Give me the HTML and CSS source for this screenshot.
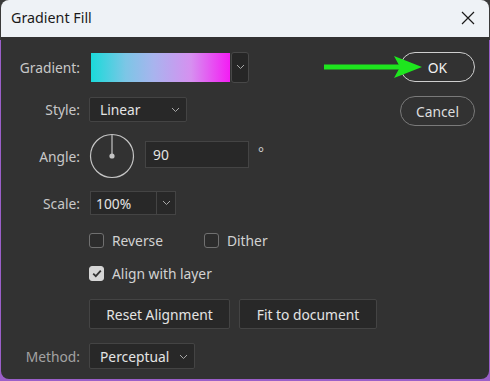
FILE: index.html
```html
<!DOCTYPE html>
<html>
<head>
<meta charset="utf-8">
<link rel="stylesheet" href="styles.css">
</head>
<body>
<div class="dialog">
  <div class="titlebar">
    <span class="title">Gradient Fill</span>
    <svg class="close" width="14" height="14" viewBox="0 0 14 14"><path d="M1 1L13 13M13 1L1 13" stroke="#1a1a1a" stroke-width="1.2" fill="none"/></svg>
  </div>
  <div class="content">
    <div class="form">
      <div class="row r-grad">
        <span class="lbl">Gradient:</span>
        <div class="swatch"></div>
        <div class="swatch-arrow"><svg width="9" height="6" viewBox="0 0 9 6"><path d="M1 1L4.5 4.5L8 1" stroke="#a8a8a8" stroke-width="1" fill="none"/></svg></div>
      </div>
      <div class="row r-style">
        <span class="lbl">Style:</span>
        <div class="select sel-style"><span>Linear</span><svg width="9" height="6" viewBox="0 0 9 6"><path d="M1 1L4.5 4.5L8 1" stroke="#a8a8a8" stroke-width="1" fill="none"/></svg></div>
      </div>
      <div class="row r-angle">
        <span class="lbl">Angle:</span>
        <svg class="dial" width="46" height="46" viewBox="0 0 46 46"><circle cx="23" cy="23" r="21.5" stroke="#c4c4c4" stroke-width="1.2" fill="none"/><path d="M23 23V2" stroke="#c4c4c4" stroke-width="1.2"/><circle cx="23" cy="23" r="2.6" fill="#c4c4c4"/></svg>
        <div class="input angle-input">90</div>
        <span class="deg">°</span>
      </div>
      <div class="row r-scale">
        <span class="lbl">Scale:</span>
        <div class="combo"><span class="combo-val">100%</span><span class="combo-btn"><svg width="9" height="6" viewBox="0 0 9 6"><path d="M1 1L4.5 4.5L8 1" stroke="#a8a8a8" stroke-width="1" fill="none"/></svg></span></div>
      </div>
      <div class="row r-checks">
        <span class="lbl"></span>
        <label class="check"><span class="box"></span>Reverse</label>
        <label class="check dither"><span class="box"></span>Dither</label>
      </div>
      <div class="row r-align">
        <span class="lbl"></span>
        <label class="check"><span class="box checked"><svg width="10" height="9" viewBox="0 0 10 9"><path d="M1.2 4.6L3.8 7.2L8.8 1.6" stroke="#333" stroke-width="1.8" fill="none"/></svg></span>Align with layer</label>
      </div>
      <div class="row r-buttons">
        <span class="lbl"></span>
        <button class="sbtn reset">Reset Alignment</button>
        <button class="sbtn fit">Fit to document</button>
      </div>
      <div class="row r-method">
        <span class="lbl dim">Method:</span>
        <div class="select sel-method"><span>Perceptual</span><svg width="9" height="6" viewBox="0 0 9 6"><path d="M1 1L4.5 4.5L8 1" stroke="#a8a8a8" stroke-width="1" fill="none"/></svg></div>
      </div>
    </div>
    <div class="actions">
      <button class="pill ok">OK</button>
      <button class="pill cancel">Cancel</button>
    </div>
    <svg class="arrow" width="100" height="24" viewBox="0 0 100 24"><path d="M0 12H76" stroke="#1ee61e" stroke-width="5"/><path d="M70 1L98 12L70 23L76 12Z" fill="#1ee61e"/></svg>
  </div>
</div>
</body>
</html>
```

FILE: styles.css
```css
html, body {
  margin: 0;
  padding: 0;
}
body {
  width: 490px;
  height: 381px;
  overflow: hidden;
  background: linear-gradient(#3a3a3a 0 40px, #9b5fc9 40px);
  font-family: "Noto Sans", "Open Sans", sans-serif;
}
.dialog {
  margin: 0 1px 0 1px;
  height: 379px;
  background: #323232;
  border-radius: 8px;
  overflow: hidden;
  display: flex;
  flex-direction: column;
}
.titlebar {
  height: 37px;
  flex: none;
  background: #eef2f6;
  display: flex;
  align-items: center;
  justify-content: space-between;
  padding: 0 14px 0 10px;
}
.title {
  font-size: 14.3px;
  color: #1a1a1a;
  position: relative;
  top: -1px;
}
.close {
  position: relative;
  top: -1px;
}
.content {
  position: relative;
  flex: 1;
  display: flex;
  padding-top: 15px;
}
.form {
  display: flex;
  flex-direction: column;
}
.row {
  display: flex;
  align-items: center;
}
.lbl {
  width: 79px;
  flex: none;
  text-align: right;
  font-size: 13.8px;
  color: #c8c8c8;
  margin-right: 9px;
}
.lbl.dim {
  color: #a3a3a3;
}
.r-grad { height: 30px; }
.swatch {
  width: 139px;
  height: 29px;
  margin-left: 2px;
  background: linear-gradient(90deg, #1adada 0%, #7cc6e6 25%, #a8b4ee 45%, #d690f0 72%, #f41cf4 100%);
}
.swatch-arrow {
  width: 16px;
  height: 29px;
  margin-left: 1px;
  border: 1px solid #484848;
  border-radius: 3px;
  background: #262626;
  display: flex;
  align-items: center;
  justify-content: center;
}
.r-style { height: 25px; margin-top: 15px; }
.select {
  height: 23px;
  border: 1px solid #444;
  border-radius: 2px;
  background: #282828;
  display: flex;
  align-items: center;
  justify-content: space-between;
  padding: 0 6px 0 10px;
  font-size: 13.8px;
  color: #e4e4e4;
}
.select svg { margin-top: 1px; }
.sel-style { width: 80px; }
.r-angle { height: 46px; margin-top: 11px; }
.dial { margin-left: 0px; flex: none; }
.input {
  height: 25px;
  border: 1px solid #444;
  background: #282828;
  color: #e4e4e4;
  font-size: 13.8px;
  display: flex;
  align-items: center;
  padding-left: 7px;
  box-sizing: border-box;
}
.angle-input {
  width: 104px;
  height: 27px;
  margin-left: 10px;
  margin-top: -3px;
}
.deg {
  color: #c8c8c8;
  font-size: 14px;
  margin-left: 9px;
  margin-top: -8px;
}
.r-scale { height: 24px; margin-top: 12px; }
.combo {
  display: flex;
  height: 24px;
  box-sizing: border-box;
  border: 1px solid #444;
  background: #282828;
  margin-left: 1px;
}
.combo-val {
  width: 60px;
  padding-left: 5px;
  display: flex;
  align-items: center;
  font-size: 13.8px;
  color: #e4e4e4;
  border-right: 1px solid #444;
}
.combo-btn {
  width: 18px;
  display: flex;
  align-items: center;
  justify-content: center;
}
.r-checks { height: 20px; margin-top: 15px; }
.r-align { height: 20px; margin-top: 13px; }
.check {
  display: flex;
  align-items: center;
  font-size: 13.8px;
  color: #d2d2d2;
}
.box {
  width: 13px;
  height: 13px;
  border: 1px solid #707070;
  border-radius: 3px;
  background: #2c2c2c;
  margin-right: 8px;
  display: flex;
  align-items: center;
  justify-content: center;
}
.box.checked {
  background: #d6d6d6;
  border-color: #d6d6d6;
}
.dither { margin-left: 41px; }
.r-buttons { height: 30px; margin-top: 16px; }
.sbtn {
  height: 30px;
  box-sizing: border-box;
  border: 1px solid #444;
  border-radius: 2px;
  background: #282828;
  color: #e4e4e4;
  font-family: inherit;
  font-size: 13.8px;
  padding: 0;
}
.reset { width: 141px; }
.fit { width: 138px; margin-left: 9px; }
.r-method { height: 26px; margin-top: 14px; }
.sel-method { width: 88px; height: 24px; }
.actions {
  margin-left: auto;
  margin-right: 14px;
  display: flex;
  flex-direction: column;
  gap: 14px;
}
.pill {
  width: 75px;
  height: 30px;
  box-sizing: border-box;
  border-radius: 15px;
  background: #323232;
  font-family: inherit;
  font-size: 13.8px;
  padding: 0;
}
.ok {
  border: 1.5px solid #cfcfcf;
  color: #f2f2f2;
}
.cancel {
  border: 1px solid #7a7a7a;
  color: #dedede;
}
.arrow {
  position: absolute;
  left: 323px;
  top: 18px;
}
```
